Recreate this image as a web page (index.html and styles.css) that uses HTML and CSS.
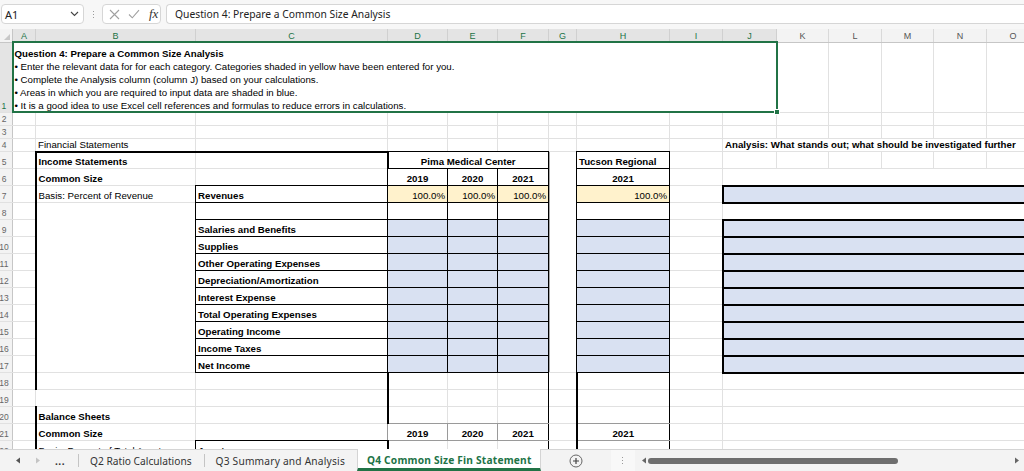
FILE: index.html
```html
<!DOCTYPE html>
<html>
<head>
<meta charset="utf-8">
<link rel="stylesheet" href="styles.css">
</head>
<body>
<div class="fbar">
  <div class="namebox"><span>A1</span>
    <svg class="chev" width="9" height="6" viewBox="0 0 9 6"><path d="M1 1 L4.5 4.5 L8 1" fill="none" stroke="#444" stroke-width="1.1"/></svg>
  </div>
  <div class="vdots"><i></i><i></i><i></i></div>
  <div class="fxbox">
    <svg width="11" height="11" viewBox="0 0 11 11"><path d="M1 1 L10 10 M10 1 L1 10" stroke="#a0a0a0" stroke-width="1.1"/></svg>
    <svg width="12" height="10" viewBox="0 0 12 10"><path d="M1 5.5 L4.3 8.8 L11 1.2" fill="none" stroke="#a0a0a0" stroke-width="1.1"/></svg>
    <span class="fx">fx</span>
  </div>
  <div class="formula">Question 4: Prepare a Common Size Analysis</div>
</div>

<div class="sheet">
<table class="grid">
<colgroup>
<col class="ch"><col class="cA"><col class="cB"><col class="cC"><col class="cD"><col class="cE"><col class="cF"><col class="cG"><col class="cH"><col class="cI"><col class="cJ"><col class="cK"><col class="cL"><col class="cM"><col class="cN"><col class="cO">
</colgroup>
<tr class="hdr">
<th class="corner"><span class="tri"></span></th>
<th class="sel">A</th><th class="sel">B</th><th class="sel">C</th><th class="sel">D</th><th class="sel">E</th><th class="sel">F</th><th class="sel">G</th><th class="sel">H</th><th class="sel">I</th><th class="sel">J</th>
<th>K</th><th>L</th><th>M</th><th>N</th><th>O</th>
</tr>
<tr class="r1">
<th class="rh rsel">1</th>
<td colspan="10" class="a1">
<div class="a1in">
<div class="tt">Question 4: Prepare a Common Size Analysis</div>
<div>• Enter the relevant data for for each category. Categories shaded in yellow have been entered for you.</div>
<div>• Complete the Analysis column (column J) based on your calculations.</div>
<div>• Areas in which you are required to input data are shaded in blue.</div>
<div>• It is a good idea to use Excel cell references and formulas to reduce errors in calculations.</div>
</div>
<span class="handle"></span>
</td>
<td></td><td></td><td></td><td></td><td></td>
</tr>
<tr class="rs"><th class="rh">2</th><td></td><td></td><td></td><td></td><td></td><td></td><td></td><td></td><td></td><td></td><td></td><td></td><td></td><td></td><td></td></tr>
<tr class="rs"><th class="rh">3</th><td></td><td></td><td></td><td></td><td></td><td></td><td></td><td></td><td></td><td></td><td></td><td></td><td></td><td></td><td></td></tr>
<tr class="rs"><th class="rh">4</th><td></td><td>Financial Statements</td><td></td><td></td><td></td><td></td><td></td><td></td><td></td><td colspan="6" class="bo">Analysis: What stands out; what should be investigated further</td></tr>
<tr class="rr"><th class="rh">5</th><td></td><td class="T2 L2 bo">Income Statements</td><td class="T2"></td><td colspan="3" class="L2 t b r bo c">Pima Medical Center</td><td rowspan="13" class="gcol"></td><td class="t l r b bo">Tucson Regional</td><td></td><td></td><td></td><td></td><td></td><td></td><td></td></tr>
<tr class="rr"><th class="rh">6</th><td></td><td class="L2 bo">Common Size</td><td></td><td class="l t b r bo c">2019</td><td class="t b r bo c">2020</td><td class="t b r bo c">2021</td><td class="l r b bo c">2021</td><td></td><td colspan="6"></td></tr>
<tr class="rr"><th class="rh">7</th><td></td><td class="L2">Basis: Percent of Revenue</td><td class="t l b bo">Revenues</td><td class="l b r y rt">100.0%</td><td class="b r y rt">100.0%</td><td class="b r y rt">100.0%</td><td class="l r b y rt">100.0%</td><td></td><td colspan="6" class="bl L2 T2 B2"></td></tr>
<tr class="rr"><th class="rh">8</th><td></td><td rowspan="10" class="L2"></td><td class="l b"></td><td class="l b r"></td><td class="b r"></td><td class="b r"></td><td class="l r b"></td><td></td><td colspan="6"></td></tr>
<tr class="rr"><th class="rh">9</th><td></td><td class="l b bo">Salaries and Benefits</td><td class="l b r bl"></td><td class="b r bl"></td><td class="b r bl"></td><td class="l r b bl"></td><td></td><td colspan="6" class="bl L2 T2 B2"></td></tr>
<tr class="rr"><th class="rh">10</th><td></td><td class="l b bo">Supplies</td><td class="l b r bl"></td><td class="b r bl"></td><td class="b r bl"></td><td class="l r b bl"></td><td></td><td colspan="6" class="bl L2 T2 B2"></td></tr>
<tr class="rr"><th class="rh">11</th><td></td><td class="l b bo">Other Operating Expenses</td><td class="l b r bl"></td><td class="b r bl"></td><td class="b r bl"></td><td class="l r b bl"></td><td></td><td colspan="6" class="bl L2 T2 B2"></td></tr>
<tr class="rr"><th class="rh">12</th><td></td><td class="l b bo">Depreciation/Amortization</td><td class="l b r bl"></td><td class="b r bl"></td><td class="b r bl"></td><td class="l r b bl"></td><td></td><td colspan="6" class="bl L2 T2 B2"></td></tr>
<tr class="rr"><th class="rh">13</th><td></td><td class="l b bo">Interest Expense</td><td class="l b r bl"></td><td class="b r bl"></td><td class="b r bl"></td><td class="l r b bl"></td><td></td><td colspan="6" class="bl L2 T2 B2"></td></tr>
<tr class="rr"><th class="rh">14</th><td></td><td class="l b bo">Total Operating Expenses</td><td class="l b r bl"></td><td class="b r bl"></td><td class="b r bl"></td><td class="l r b bl"></td><td></td><td colspan="6" class="bl L2 T2 B2"></td></tr>
<tr class="rr"><th class="rh">15</th><td></td><td class="l b bo">Operating Income</td><td class="l b r bl"></td><td class="b r bl"></td><td class="b r bl"></td><td class="l r b bl"></td><td></td><td colspan="6" class="bl L2 T2 B2"></td></tr>
<tr class="rr"><th class="rh">16</th><td></td><td class="l b bo">Income Taxes</td><td class="l b r bl"></td><td class="b r bl"></td><td class="b r bl"></td><td class="l r b bl"></td><td></td><td colspan="6" class="bl L2 T2 B2"></td></tr>
<tr class="rr"><th class="rh">17</th><td></td><td class="l b bo">Net Income</td><td class="l b r bl"></td><td class="b r bl"></td><td class="b r bl"></td><td class="l r b bl"></td><td></td><td colspan="6" class="bl L2 T2 B2"></td></tr>
<tr class="rr"><th class="rh">18</th><td></td><td class="L2"></td><td></td><td class="L2"></td><td></td><td class="r"></td><td></td><td class="L2 r"></td><td></td><td colspan="6"></td></tr>
<tr class="rr"><th class="rh">19</th><td></td><td></td><td></td><td class="L2"></td><td></td><td class="r"></td><td></td><td class="L2 r"></td><td></td><td colspan="6"></td></tr>
<tr class="rr"><th class="rh">20</th><td></td><td class="L2 bo">Balance Sheets</td><td></td><td class="L2 gb"></td><td class="gb"></td><td class="r gb"></td><td></td><td class="L2 r gb"></td><td></td><td colspan="6"></td></tr>
<tr class="rr"><th class="rh">21</th><td></td><td class="L2 bo">Common Size</td><td></td><td class="gl gr gb bo c">2019</td><td class="gr gb bo c">2020</td><td class="r gb bo c">2021</td><td></td><td class="L2 r gb bo c">2021</td><td></td><td colspan="6"></td></tr>
<tr class="rr"><th class="rh">22</th><td></td><td class="L2">Basis: Percent of Total Assets</td><td class="t l bo">Assets</td><td class="L2"></td><td></td><td class="r"></td><td></td><td class="L2 r"></td><td></td><td colspan="6"></td></tr>
</table>
</div>

<div class="tabs">
  <div class="nav">
    <svg width="6" height="7" viewBox="0 0 6 7"><path d="M5 0.5 L1 3.5 L5 6.5 Z" fill="#555"/></svg>
    <svg width="6" height="7" viewBox="0 0 6 7"><path d="M1 0.5 L5 3.5 L1 6.5 Z" fill="#c4c4c4"/></svg>
  </div>
  <span class="more">...</span>
  <span class="sep"></span>
  <span class="tab">Q2 Ratio Calculations</span>
  <span class="sep"></span>
  <span class="tab q3">Q3 Summary and Analysis</span>
  <span class="tab active">Q4 Common Size Fin Statement</span>
  <div class="addsheet">
    <svg width="14" height="14" viewBox="0 0 14 14"><circle cx="7" cy="7" r="6" fill="none" stroke="#666" stroke-width="1"/><path d="M7 4 V10 M4 7 H10" stroke="#444" stroke-width="1.2"/></svg>
  </div>
  <div class="hsplit"><i></i><i></i><i></i></div>
  <div class="hscroll">
    <svg width="6" height="7" viewBox="0 0 6 7"><path d="M5 0.5 L1 3.5 L5 6.5 Z" fill="#666"/></svg>
    <span class="thumb"></span>
    <svg class="rarr" width="6" height="7" viewBox="0 0 6 7"><path d="M1 0.5 L5 3.5 L1 6.5 Z" fill="#666"/></svg>
  </div>
</div>
</body>
</html>
```

FILE: styles.css
```css
* { box-sizing: border-box; }
html, body { margin: 0; padding: 0; }
body {
  width: 1024px;
  height: 471px;
  overflow: hidden;
  background: #fff;
  font-family: "Liberation Sans", Arial, sans-serif;
  color: #000;
}

/* ---------- formula bar ---------- */
.fbar {
  height: 29px;
  display: flex;
  align-items: flex-start;
  padding: 4px 0 0 1px;
  background: #f7f7f7;
  font-family: "Noto Sans", "Liberation Sans", sans-serif;
  font-size: 10px;
  color: #222;
}
.namebox {
  width: 83px;
  height: 20px;
  background: #fff;
  border: 1px solid #d6d6d6;
  border-radius: 4px;
  display: flex;
  align-items: center;
  justify-content: space-between;
  padding: 0 4px 0 3px;
  font-size: 11px;
}
.vdots {
  width: 18px;
  height: 20px;
  display: flex;
  flex-direction: column;
  align-items: center;
  justify-content: center;
  gap: 2px;
}
.vdots i, .hsplit i {
  display: block;
  width: 1px;
  height: 1px;
  background: #9a9a9a;
}
.fxbox {
  width: 59px;
  height: 20px;
  background: #fff;
  border: 1px solid #d6d6d6;
  border-radius: 4px;
  display: flex;
  align-items: center;
  gap: 8px;
  padding-left: 6px;
}
.fx {
  font-family: "Liberation Serif", serif;
  font-style: italic;
  font-size: 13px;
  color: #333;
  margin-left: 1px;
}
.formula {
  flex: 1;
  height: 20px;
  margin-left: 5px;
  background: #fff;
  border: 1px solid #d6d6d6;
  border-right: none;
  border-radius: 4px 0 0 4px;
  display: flex;
  align-items: center;
  padding-left: 8px;
  font-size: 10.3px;
}

/* ---------- grid ---------- */
.sheet {
  height: 420px;
  overflow: hidden;
}
.grid {
  border-collapse: collapse;
  table-layout: fixed;
  width: 1044px;
  margin-left: -5px;
}
.grid col { border-left: 1px solid #e1e1e1; border-right: 1px solid #e1e1e1; }
.grid tr { border-bottom: 1px solid #e1e1e1; }
.ch { width: 17px; }
.cA { width: 23px; }
.cB { width: 160px; }
.cC { width: 192px; }
.cD { width: 60px; }
.cE { width: 50px; }
.cF { width: 51px; }
.cG { width: 28px; }
.cH { width: 93px; }
.cI { width: 53px; }
.cJ { width: 54px; }
.cK { width: 52px; }
.cL { width: 53px; }
.cM { width: 52px; }
.cN { width: 53px; }
.cO { width: 53px; }

.hdr { height: 13px; }
.r1 { height: 70px; }
.rs { height: 13px; }
.rr { height: 17px; }

.grid th {
  font-family: "Liberation Sans", Arial, sans-serif;
  font-weight: normal;
  font-size: 9px;
  color: #555;
  padding: 0;
  background: #f3f3f3;
  line-height: 10px;
  text-align: center;
  vertical-align: middle;
}
.hdr th {
  border-right: 1px solid #d9d9d9;
  border-bottom: 1px solid #c6c6c6;
  padding-top: 2px;
}
.hdr th.sel {
  background: #e4e4e4;
  color: #217346;
  border-right: 1px solid #d0d0d0;
}
.hdr th.corner { position: relative; border-right: 1px solid #c6c6c6; }
.tri {
  position: absolute;
  right: 2px;
  bottom: 2px;
  width: 0;
  height: 0;
  border-left: 6px solid transparent;
  border-bottom: 6px solid #c8c8c8;
}
.grid th.rh {
  border-right: 1px solid #c6c6c6;
  border-bottom: 1px solid #e1e1e1;
  color: #666;
  font-size: 8.5px;
  vertical-align: bottom;
  line-height: 10px;
  padding-bottom: 1px;
}
.grid th.rsel {
  background: #e4e4e4;
  color: #217346;
}

.grid td {
  font-size: 9.7px;
  line-height: 11px;
  padding: 0 2px 1px;
  white-space: nowrap;
  overflow: visible;
  vertical-align: bottom;
}
.a1 {
  position: relative;
  border: 2px solid #217346;
  vertical-align: top !important;
  line-height: 13px !important;
  padding: 4px 2px 0 1px !important;
}
.a1in { height: 58px; }
.tt { font-weight: bold; }
.handle {
  position: absolute;
  right: -4px;
  bottom: -4px;
  width: 6px;
  height: 6px;
  background: #217346;
  border: 1px solid #fff;
}

.bo { font-weight: bold; }
.c { text-align: center; }
.rt { text-align: right; }
.y { background: #fff2cc; }
.bl { background: #d9e1f2; }

.t { border-top: 1px solid #000; }
.b { border-bottom: 1px solid #000; }
.l { border-left: 1px solid #000; }
.r { border-right: 1px solid #000; }
.T2 { border-top: 2px solid #000; }
.B2 { border-bottom: 2px solid #000; }
.L2 { border-left: 2px solid #000; }
.gb { border-bottom: 1px solid #9a9a9a; }
.gr { border-right: 1px solid #9a9a9a; }
.gl { border-left: 1px solid #9a9a9a; }
.gcol { background: #fff; box-shadow: inset 1px 0 0 #a8a8a8; }

/* ---------- sheet tabs ---------- */
.tabs {
  height: 22px;
  display: flex;
  align-items: stretch;
  background: #f3f3f3;
  border-top: 1px solid #d4d4d4;
  font-family: "Noto Sans", "Liberation Sans", sans-serif;
  font-size: 10.2px;
  color: #333;
}
.nav {
  width: 50px;
  display: flex;
  align-items: center;
  gap: 14px;
  padding-left: 15px;
}
.more {
  display: flex;
  align-items: center;
  font-weight: bold;
  padding-left: 5px;
  width: 28px;
  letter-spacing: 0.5px;
}
.sep {
  width: 1px;
  align-self: center;
  height: 13px;
  background: #c4c4c4;
}
.tab {
  display: flex;
  align-items: center;
  padding: 0 12px 0 11px;
}
.tab.q3 { letter-spacing: 0.2px; padding-right: 12px; }
.tab.active {
  background: #fff;
  color: #217346;
  font-weight: bold;
  letter-spacing: 0.2px;
  border-left: 1px solid #d4d4d4;
  border-right: 1px solid #d4d4d4;
  border-bottom: 3px solid #217346;
  padding: 2px 8px 0 9px;
  margin-left: 0;
  margin-top: -1px;
}
.addsheet {
  width: 70px;
  display: flex;
  align-items: center;
  justify-content: center;
}
.hsplit {
  width: 24px;
  display: flex;
  flex-direction: column;
  align-items: center;
  justify-content: center;
  gap: 2px;
  background: #f8f8f8;
}
.hscroll {
  flex: 1;
  display: flex;
  align-items: center;
  padding-left: 6px;
  padding-right: 4px;
}
.thumb {
  display: block;
  width: 250px;
  height: 6px;
  border-radius: 3px;
  background: #6e6e6e;
  margin-left: 1px;
}
.rarr { margin-left: auto; }
```
